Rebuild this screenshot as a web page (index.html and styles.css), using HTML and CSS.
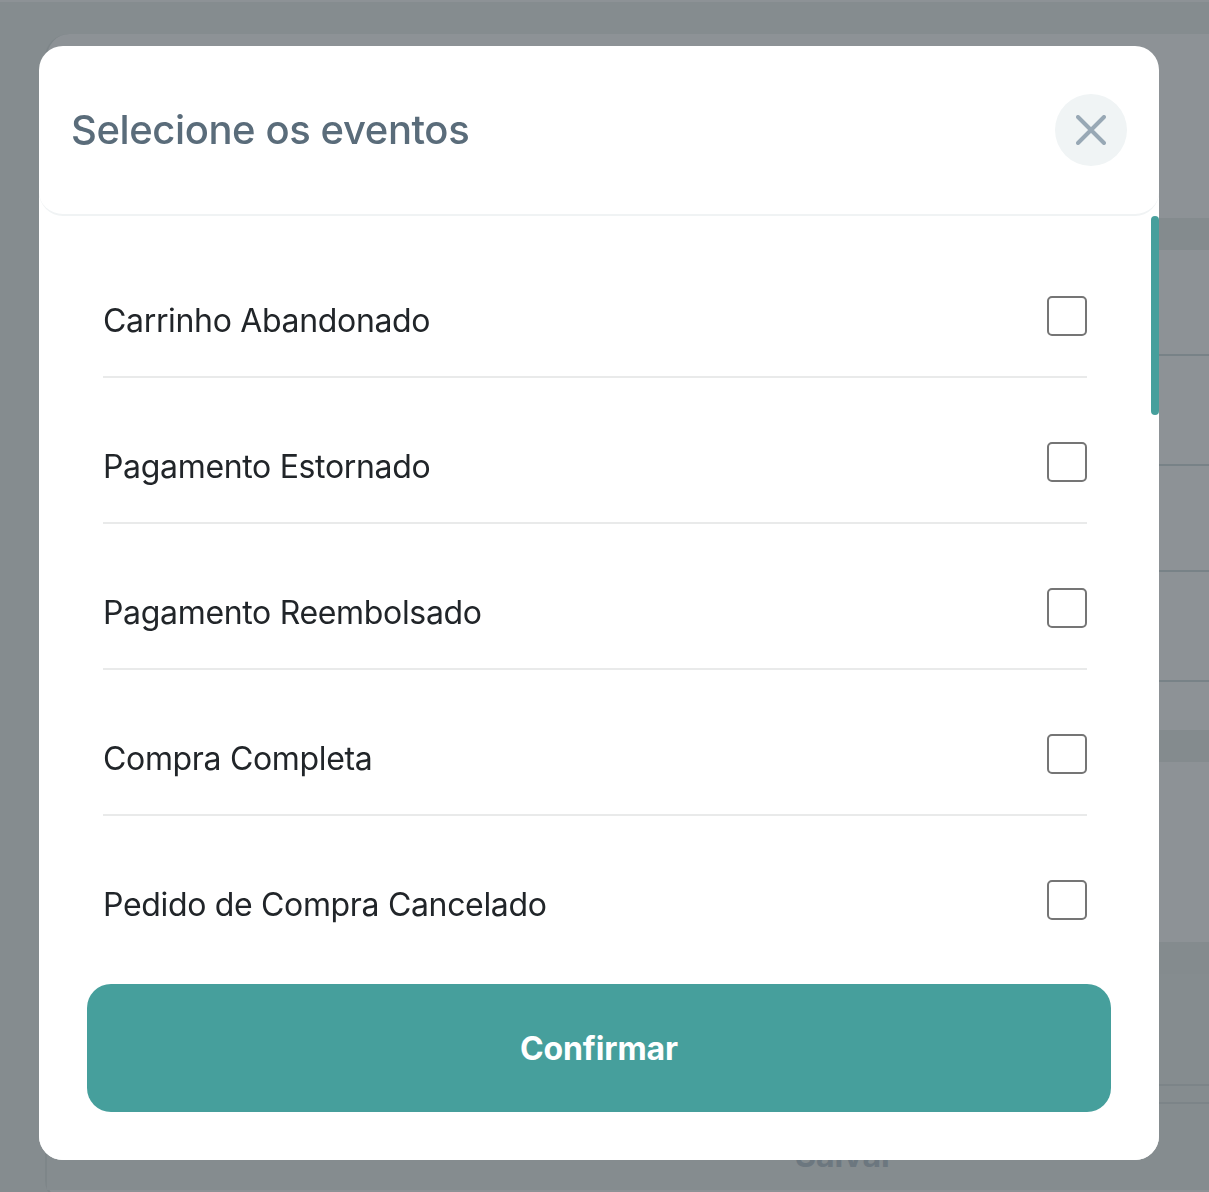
FILE: index.html
```html
<!DOCTYPE html>
<html lang="pt-BR">
<head>
<meta charset="utf-8">
<title>Selecione os eventos</title>
<link rel="stylesheet" href="styles.css">
</head>
<body>
<div class="page">
  <div class="card">
    <div class="band band-first"></div>
    <div class="line line-a"></div>
    <div class="line line-b"></div>
    <div class="line line-c"></div>
    <div class="line line-d"></div>
    <div class="band band-second"></div>
    <div class="gap-two"></div>
    <div class="band band-third"></div>
    <div class="dark-area"></div>
    <div class="line line-e"></div>
    <div class="dark-area-two"></div>
    <div class="save-row"><span class="save">Salvar</span></div>
  </div>
</div>
<div class="overlay">
  <section class="modal">
    <header class="modal-head">
      <h1 class="modal-title">Selecione os eventos</h1>
      <button class="close" aria-label="Fechar">
        <svg class="close-icon" viewBox="0 0 30 30" width="30" height="30"><path d="M2 2 L28 28 M28 2 L2 28"/></svg>
      </button>
    </header>
    <div class="modal-body">
      <ul class="list">
        <li class="row"><span class="label">Carrinho Abandonado</span><input class="check" type="checkbox"></li>
        <li class="row"><span class="label">Pagamento Estornado</span><input class="check" type="checkbox"></li>
        <li class="row"><span class="label">Pagamento Reembolsado</span><input class="check" type="checkbox"></li>
        <li class="row"><span class="label">Compra Completa</span><input class="check" type="checkbox"></li>
        <li class="row"><span class="label">Pedido de Compra Cancelado</span><input class="check" type="checkbox"></li>
      </ul>
      <div class="thumb"></div>
    </div>
    <footer class="modal-foot">
      <button class="confirm">Confirmar</button>
    </footer>
  </section>
</div>
</body>
</html>
```

FILE: styles.css
```css
* { box-sizing: border-box; }
html, body { margin: 0; height: 1192px; overflow: hidden; }
body { background: #858c8f; font-family: Inter, "Liberation Sans", sans-serif; }

.page { height: 1192px; padding: 34px 0 0 45px; border-top: 2px solid #8d9296; }
.card {
  height: 1170px;
  background: #8d9296;
  border-left: 2px solid #7e8689;
  border-bottom: 2px solid #7e8689;
  border-radius: 24px 0 0 24px;
  padding-top: 184px;
  margin-top: -2px;
}
.band { height: 32px; background: #848b8e; }
.line { height: 2px; background: #788287; }
.line-a { margin-top: 104px; }
.line-b { margin-top: 108px; }
.line-c { margin-top: 104px; }
.line-d { margin-top: 108px; }
.band-second { margin-top: 48px; }
.gap-two { height: 180px; }
.dark-area { height: 110px; background: #858c8f; }
.line-e { background: #7c8488; }
.dark-area-two { height: 16px; background: #858c8f; }
.save-row {
  display: flex;
  justify-content: flex-end;
  height: 88px;
  padding: 32px 315px 0 0;
  background: #858c8f;
  border-top: 2px solid #7c8488;
}
.save { font-size: 32px; font-weight: 700; color: #6c777f; }

.overlay {
  position: fixed;
  inset: 0;
  display: flex;
  align-items: flex-start;
  justify-content: center;
  padding: 46px 11px 0 0;
}
.modal {
  width: 1120px;
  height: 1114px;
  background: #fff;
  border-radius: 24px;
  display: flex;
  flex-direction: column;
  overflow: hidden;
}
.modal-head {
  height: 170px;
  flex: none;
  display: flex;
  align-items: center;
  justify-content: space-between;
  padding: 0 32px;
  border-bottom: 2px solid #f0f3f4;
  border-radius: 0 0 24px 24px;
}
.modal-title { margin: 0 0 2px; font-size: 40px; font-weight: 500; color: #5a6c7a; letter-spacing: -0.4px; }
.close {
  width: 72px; height: 72px;
  border: 0; padding: 0;
  border-radius: 50%;
  background: #f0f4f5;
  display: flex; align-items: center; justify-content: center;
}
.close-icon { fill: none; stroke: #98a8b5; stroke-width: 4; stroke-linecap: round; }

.modal-body { position: relative; flex: 1; min-height: 0; overflow: hidden; padding: 16px 72px 0 64px; }
.list { list-style: none; margin: 0; padding: 0; }
.row {
  height: 146px;
  display: flex;
  align-items: center;
  justify-content: space-between;
  border-bottom: 2px solid #e9eaea;
}
.label { font-size: 32px; letter-spacing: -0.33px; color: #212529; position: relative; top: 16px; }
.check {
  appearance: none;
  width: 40px; height: 40px;
  margin: 0;
  border: 2px solid #757575;
  border-radius: 5px;
  background: #fff;
  position: relative; top: 12px;
}
.thumb {
  position: absolute;
  top: 0; right: 0;
  width: 8px; height: 199px;
  background: #469f9c;
  border-radius: 4px;
}
.modal-foot { flex: none; padding: 32px 48px 48px; background: #fff; }
.confirm {
  display: block;
  width: 100%;
  height: 128px;
  border: 0;
  border-radius: 24px;
  background: #469f9c;
  color: #fff;
  font-family: inherit;
  font-size: 32px;
  font-weight: 700;
  letter-spacing: -0.1px;
}
```
